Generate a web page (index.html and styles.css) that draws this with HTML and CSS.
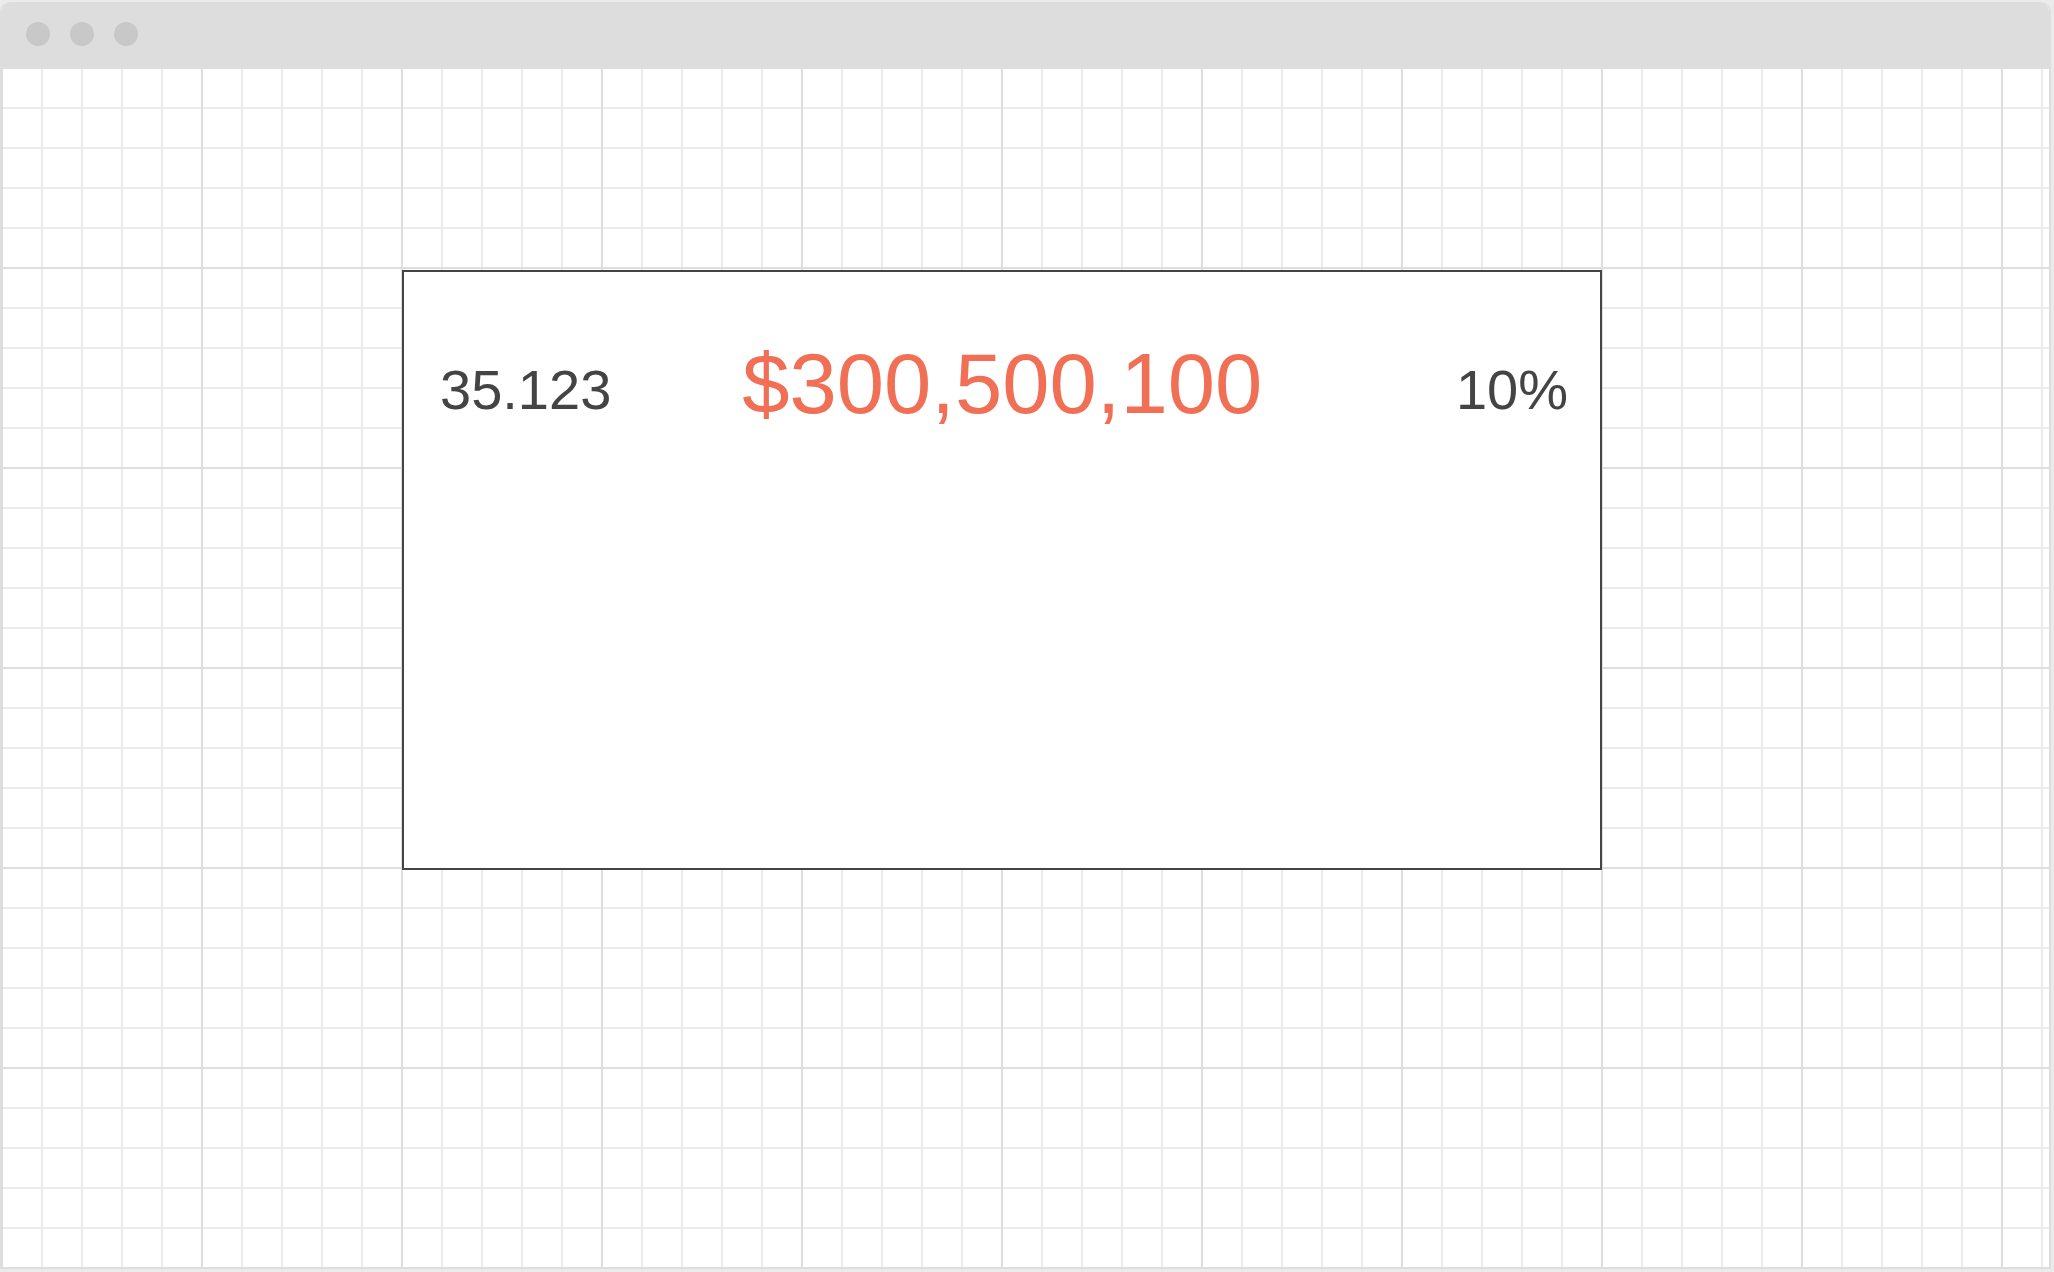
FILE: index.html
```html
<!DOCTYPE html>
<html lang="en">
<head>
<meta charset="utf-8">
<title>Stat card</title>
<link rel="stylesheet" href="styles.css">
</head>
<body>
  <div class="window">
    <div class="titlebar">
      <span class="dot"></span>
      <span class="dot"></span>
      <span class="dot"></span>
    </div>
    <div class="canvas">
      <div class="card">
        <div class="stats">
          <span class="stat stat-left">35.123</span>
          <span class="stat stat-main">$300,500,100</span>
          <span class="stat stat-right">10%</span>
        </div>
      </div>
    </div>
  </div>
</body>
</html>
```
FILE: styles.css
```css
html, body {
  margin: 0;
  padding: 0;
}
body {
  background: #ebebeb;
  font-family: "Liberation Sans", Arial, sans-serif;
  padding-top: 2px;
}
.window {
  width: 2051px;
  height: 1267px;
  box-sizing: border-box;
  border: 2px solid #dddddd;
  border-top: none;
  border-radius: 10px 10px 0 0;
  background: #ffffff;
  display: flex;
  flex-direction: column;
  overflow: hidden;
}
.titlebar {
  height: 66px;
  flex: none;
  background: #dddddd;
  display: flex;
  align-items: center;
  gap: 20px;
  padding-left: 26px;
  padding-bottom: 2px;
  box-sizing: border-box;
  margin: 0 -2px;
}
.dot {
  width: 24px;
  height: 24px;
  border-radius: 50%;
  background: #c8c8c8;
}
.canvas {
  flex: 1;
  background-color: #ffffff;
  background-image:
    linear-gradient(to right, #dedede 0, #dedede 2px, transparent 2px),
    linear-gradient(to bottom, #dedede 0, #dedede 2px, transparent 2px),
    linear-gradient(to right, #ebebeb 0, #ebebeb 2px, transparent 2px),
    linear-gradient(to bottom, #ebebeb 0, #ebebeb 2px, transparent 2px);
  background-size: 200px 200px, 200px 200px, 40px 40px, 40px 40px;
  background-position: 199px 0, 0 199px, 39px 0, 0 39px;
  padding: 202px 0 0 400px;
}
.card {
  width: 1200px;
  height: 600px;
  box-sizing: border-box;
  border: 2px solid #444444;
  background: #ffffff;
  padding: 69px 32px 0 36px;
}
.stats {
  display: flex;
  align-items: flex-start;
}
.stat {
  line-height: 1;
  color: #444444;
}
.stat-left {
  font-size: 56px;
  margin-top: 21px;
}
.stat-main {
  font-size: 85px;
  color: #f06f55;
  margin-left: 131px;
}
.stat-right {
  font-size: 56px;
  margin-top: 21px;
  margin-left: auto;
}
```
